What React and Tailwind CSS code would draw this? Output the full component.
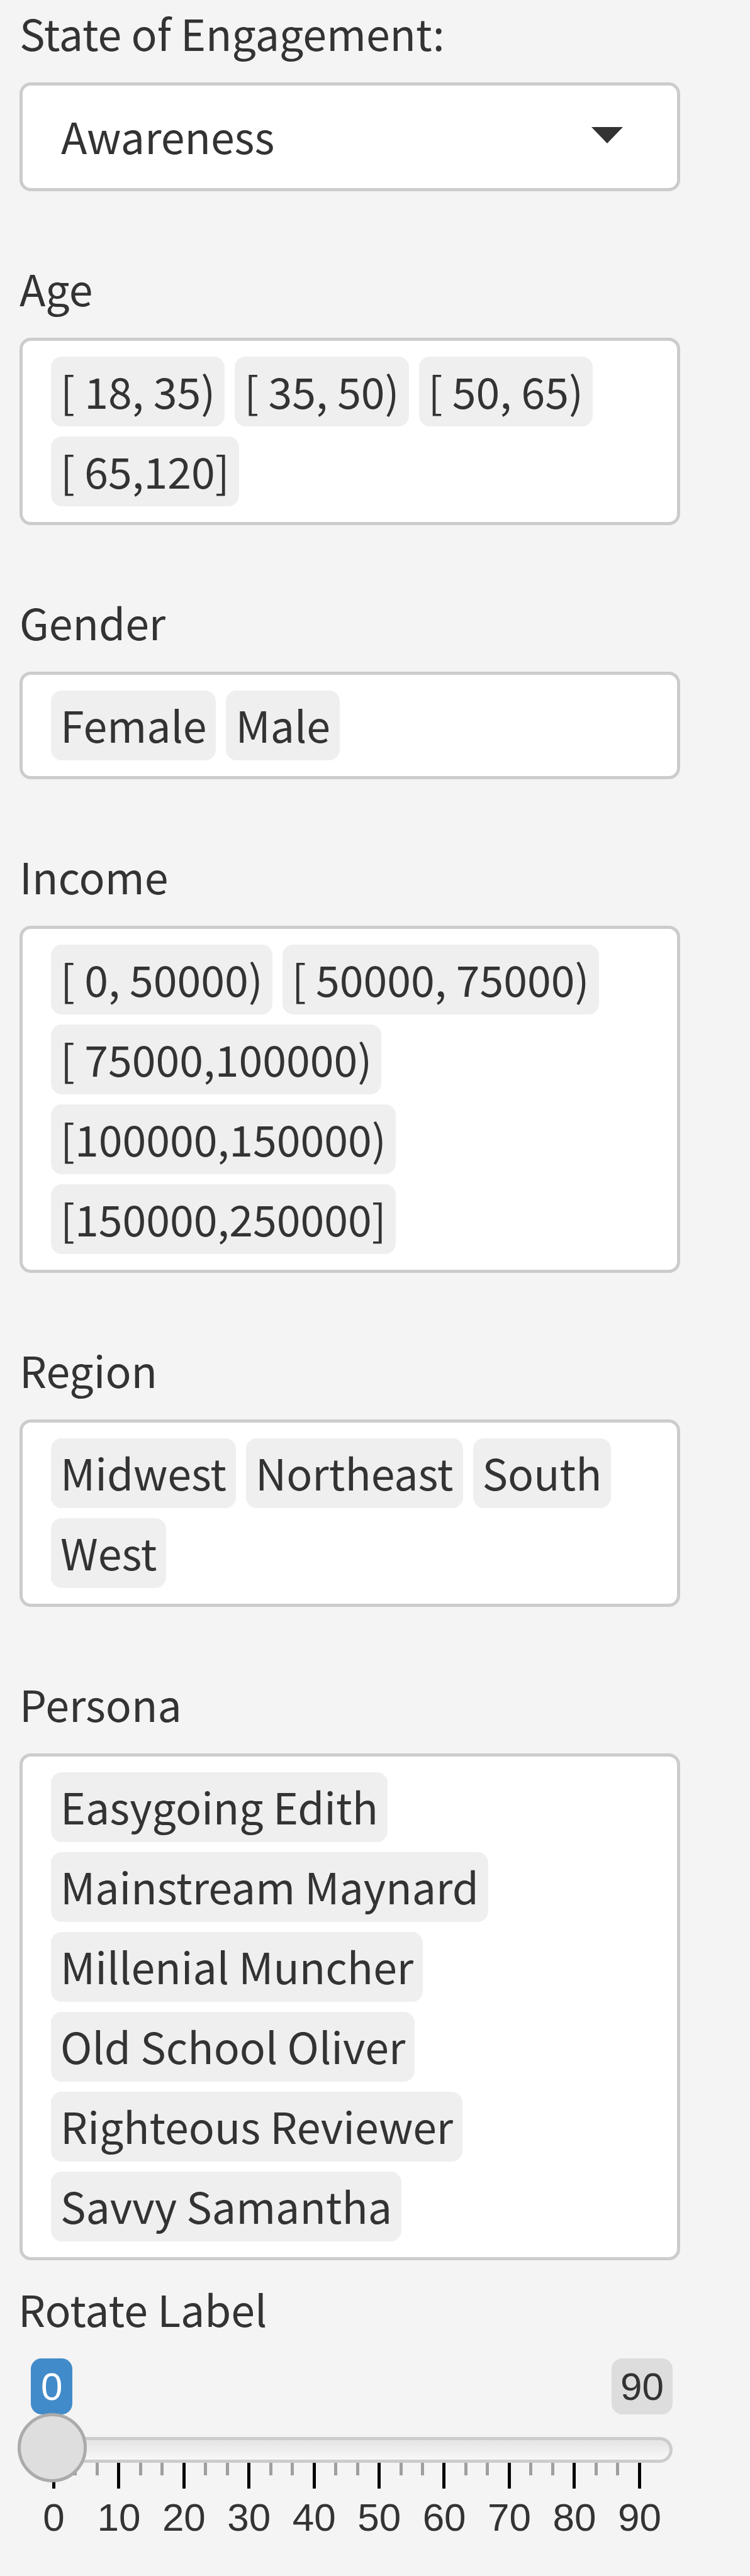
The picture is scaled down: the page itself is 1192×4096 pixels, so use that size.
import { useState } from "react";

const filters = [
  { id: "age", label: "Age", values: ["[ 18, 35)", "[ 35, 50)", "[ 50, 65)", "[ 65,120]"] },
  { id: "gender", label: "Gender", values: ["Female", "Male"] },
  {
    id: "income",
    label: "Income",
    values: ["[ 0, 50000)", "[ 50000, 75000)", "[ 75000,100000)", "[100000,150000)", "[150000,250000]"],
  },
  { id: "region", label: "Region", values: ["Midwest", "Northeast", "South", "West"] },
  {
    id: "persona",
    label: "Persona",
    values: [
      "Easygoing Edith",
      "Mainstream Maynard",
      "Millenial Muncher",
      "Old School Oliver",
      "Righteous Reviewer",
      "Savvy Samantha",
    ],
  },
];

const ticks = Array.from({ length: 28 }, (_, i) => i);
const marks = [0, 10, 20, 30, 40, 50, 60, 70, 80, 90];

function FieldLabel({ htmlFor, children }) {
  return (
    <label htmlFor={htmlFor} className="block text-[68px] leading-[90px]">
      {children}
    </label>
  );
}

function StageSelect() {
  return (
    <div>
      <FieldLabel htmlFor="stage">State of Engagement:</FieldLabel>
      <div className="relative mt-[34px]">
        <select
          id="stage"
          className="block h-[173px] w-full appearance-none rounded-[18px] border-[5px] border-[#cccccc] bg-white pb-[3px] pl-[61px] text-[68px] leading-[90px]"
        >
          <option>Awareness</option>
        </select>
        <svg
          viewBox="0 0 50 26"
          className="pointer-events-none absolute top-[71px] right-[91px] h-[26px] w-[50px]"
          fill="#333333"
          aria-hidden="true"
        >
          <path d="M0 0H50L25 26Z" />
        </svg>
      </div>
    </div>
  );
}

function TagField({ id, label, values }) {
  return (
    <div className="mt-[109px]">
      <FieldLabel htmlFor={id}>{label}</FieldLabel>
      <div className="mt-[34px] flex flex-wrap gap-4 rounded-[18px] border-[5px] border-[#cccccc] bg-white py-[25px] pr-5 pl-[45px]">
        {values.map((value) => (
          <span
            key={value}
            className="h-[111px] rounded-[17px] bg-[#efefef] px-[15px] text-[68px] leading-[108px] whitespace-nowrap"
          >
            {value}
          </span>
        ))}
        <input id={id} type="text" className="w-1 bg-transparent outline-none" />
      </div>
    </div>
  );
}

function RotateSlider() {
  const [value, setValue] = useState(0);
  return (
    <div className="mt-8 -ml-0.5">
      <FieldLabel htmlFor="rotate">Rotate Label</FieldLabel>
      <div className="mt-[34px] mr-3 font-['Liberation_Sans',Arial,sans-serif] text-[62px] leading-[89px]">
        <div className="flex justify-between pl-5">
          <output htmlFor="rotate" className="rounded-[17px] bg-[#428bca] px-4 text-white">
            {value}
          </output>
          <span className="rounded-[17px] bg-[#dddddd] px-[14px]">90</span>
        </div>
        <div className="-mt-0.5 -ml-px">
          <input
            id="rotate"
            type="range"
            min="0"
            max="90"
            value={value}
            onChange={(event) => setValue(Number(event.target.value))}
            className="relative z-10 block h-[117px] w-full appearance-none bg-transparent outline-none [&::-webkit-slider-runnable-track]:h-[41px] [&::-webkit-slider-runnable-track]:rounded-[21px] [&::-webkit-slider-runnable-track]:bg-linear-to-b [&::-webkit-slider-runnable-track]:from-[#e2e2e2] [&::-webkit-slider-runnable-track]:to-[#fafafa] [&::-webkit-slider-runnable-track]:shadow-[inset_0_0_0_5px_#cccccc] [&::-webkit-slider-thumb]:mt-[-38px] [&::-webkit-slider-thumb]:size-[110px] [&::-webkit-slider-thumb]:appearance-none [&::-webkit-slider-thumb]:rounded-full [&::-webkit-slider-thumb]:border-[5px] [&::-webkit-slider-thumb]:border-[#ababab] [&::-webkit-slider-thumb]:bg-[#dedede]"
          />
        </div>
        <div className="-mt-[38px] pr-[50px] pl-[54px]" aria-hidden="true">
          <div className="flex h-[41px] items-start justify-between">
            {ticks.map((i) => (
              <span key={i} className={i % 3 === 0 ? "h-full w-[5px] bg-black" : "h-5 w-[5px] bg-[#9f9f9f]"} />
            ))}
          </div>
          <div className="mt-[15px] flex justify-between leading-[62px]">
            {marks.map((mark) => (
              <span key={mark} className="flex w-[5px] justify-center">
                {mark}
              </span>
            ))}
          </div>
        </div>
      </div>
    </div>
  );
}

export default function App() {
  return (
    <main className="min-h-screen bg-[#f4f4f4] pt-[7px] pr-[111px] pb-[60px] pl-[31px] font-['Noto_Sans_CJK_SC',sans-serif] text-[#333333]">
      <StageSelect />
      {filters.map((filter) => (
        <TagField key={filter.id} {...filter} />
      ))}
      <RotateSlider />
    </main>
  );
}
